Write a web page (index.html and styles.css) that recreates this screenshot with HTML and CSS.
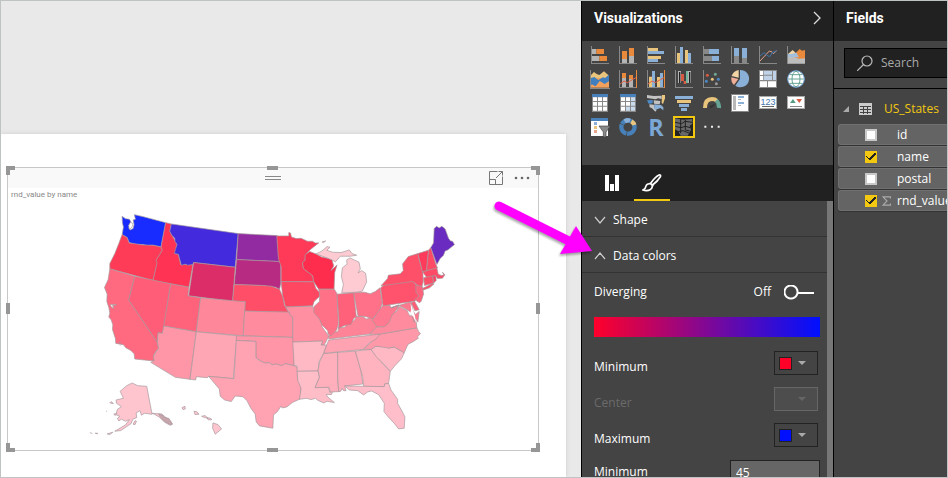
FILE: index.html
```html
<!DOCTYPE html>
<html lang="en">
<head>
<meta charset="utf-8">
<title>Report</title>
<link rel="stylesheet" href="styles.css">
</head>
<body>
<div class="app">
<main class="canvas">
  <section class="page">
    <article class="visual">
      <header class="visual-bar">
        <span class="grip"></span>
        <button class="plain" aria-label="Focus mode"><svg width="14" height="14" viewBox="0 0 14 14" fill="none" stroke="#777"><path d="M8.500.5h-8v13h13v-8M9.500.5h4v4M13.500.5L7 7M.5 8.500h6v5"/></svg></button>
        <button class="plain" aria-label="More options"><svg width="16" height="14" viewBox="0 0 16 14" fill="#666"><circle cx="2" cy="7" r="1.300"/><circle cx="8" cy="7" r="1.300"/><circle cx="14" cy="7" r="1.300"/></svg></button>
      </header>
      <h1 class="visual-title">rnd_value by name</h1>
      <svg class="map" viewBox="-246 2 1593 735" role="img" aria-label="Map of US states">
        <g>
          <path fill="#182cff" d="M97 48l10 7 12 2 5 9-6 14 3 9 9-4 3-12-3-14 7-2-3-14 26 6 68 18-14 73-24-5-18 1-12-3-20 0-22-6-6-15-15-9 4-23-3-12z"/>
          <path fill="#ff3c58" d="M97 103l15 9 6 16 22 3 20 3 30 1 24 5 4 10-18 30 3 8-13 53-130-35 0-16 15-30 12-30z"/>
          <path fill="#ff3354" d="M228 67l17 4-4 22 9 17 12 22-5 28 9 2 7 31 37-1-12 69-108-20 12-53-3-8 19-30-4-10z"/>
          <path fill="#432bdd" d="M245 71l201 29-9 101-125-14-3 6-15 2-6-3-13 3-9-33-12-2 3-12 5-16-6-8-1-10-8-8-7-13z"/>
          <path fill="#922ba2" d="M446 100l117 6 2 25 4 20 2 33-130-6z"/>
          <path fill="#b82b83" d="M441 178l130 6 3 8 0 58-4 18-12-7-13-1-25-4-86-3z"/>
          <path fill="#dc2d68" d="M312 187l125 14-8 102-132-16z"/>
          <path fill="#ff4e68" d="M434 253l86 3 25 2 25 9 10 23 5 25 13 22-133-4 2-28-38-2z"/>
          <path fill="#fff" d="M122 66l8 4-4 12-8 5-1-12z"/>
        </g>
        <g transform="translate(0 330)">
          <path fill="#ff6a80" d="M60-124l75 22-18 72L203 97l3 18-8 10-6 10 1 18-58-6-2-16-10-10-15-8-7-9-23-4-1-14-9-28 1-14-5-15-7-8 3-12-3-17-6-18 1-22-8-20 11-24z"/>
          <path fill="#fff" d="M62-17l18 1-12 2 4 9-8-5z"/>
          <path fill="#ff5d78" d="M135-102l108 23-20 127-5 22-13-2-2 29L117-30z"/>
          <path fill="#ff627b" d="M243-79l55 10-3 26 38 6-13 102-98-17z"/>
          <path fill="#ff879a" d="M333-37l134 12-6 102-141-12z"/>
          <path fill="#ff96a7" d="M222 48l98 17-19 143-44-6-74-45 10-4-2-13 8-15 8-10-4-18 2-29 13 2z"/>
          <path fill="#ffa6b4" d="M320 65l122 12-11 129-75-7-2 4-34-3-2 10-17-2z"/>
          <path fill="#ff8c9e" d="M465 3l135 3 5 8 5 6v62l-149-5z"/>
          <path fill="#ff95a7" d="M440 77l170 5 3 18 1 67-16-4-10-2-12 6-16-5-12 2-9-6-12 1-14-6-14-10V94l-59-3z"/>
          <path fill="#ffa2b1" d="M440 91l59 3v49l14 10 14 6 12-1 9 6 12-2 16 5 12-6 26 6 10 5v33l11 27-3 35-22 10-18 14-14 3-3-6-11 17-12 10-2 40-40-7-10-12-3-24-13-17-12-23-12-12-23-2-12 17-20-5-13-11-3-22-32-38 76 7z"/>
          <path fill="#ffc5ce" d="M83 298l12-8-15-10-1-10 22-5-10-21 20-17 16-8 17 8 27 2 16 84-23-3-9 6-4-14-12 7 2 14-12 5-5 13-31 21-18 2 32-19 12-16-12 5-12-6-8 5-4-8 7-6-12-5z"/>
          <path fill="#ffc5ce" d="M130 343l6-11 4 2-4 10zM187 310l9 1 20 1 14 12 8 5 10 15-7 2-16-9-17-16-14-8zM60 279l11 2-7-6zM72 312l9-1-5 6zM52 372l17-5-9 7zM0 368l8 3M16 370h7v2zM49 304h3M277 293l9-4 1 8-7 2zM313 304l8 1 7 8-12 1zM336 319l11-2 8 8-10-2zM352 324l8 0 7 5-11 1zM370 339l15 5 11 13-19 16-8-18z"/>
          <path fill="#c8a5ad" d="M207 312l12 4 6 7 12 2 11 16-6 3-17-9-14-15z"/>
          <path fill="#ff6a80" d="M87 96l6 1-3 2zM90 106h2"/>
        </g>
        <g transform="translate(540 330)">
          <path fill="#ff8fa1" d="M48-10l82-2 5 12 15 22 8 17 0 11 20 28-7 15-7 12-9 0 5-12-90 3V20l-8-5-3-10z"/>
          <path fill="#ffb9c4" d="M70 96l90-3-5 12 17 0-10 26-13 24-3 28-63 1v-16l-9-2z"/>
          <path fill="#ffbdc8" d="M83 184l63-1 4 19-13 31 41-1 3 15 9-3-4 10-15-1 3 7 21 18-22-4-10 5-18-8-7-6-13 4-13-4-22 3 5-33-10-23z"/>
          <path fill="#ffafbb" d="M163 130l42-3v80l3 38-25 1-5-14-41 1 13-31-4-22 5-25z"/>
          <path fill="#ffabba" d="M205 127l53-4 16 56 7 43-55 6 4 14-8 0-4-7-4 9-6 1-3-38z"/>
          <path fill="#ffb3bf" d="M258 123l47-5 16 20 24 27 18 20-5 35-12 2-1 8-62-1-3-29z"/>
          <path fill="#ffbec9" d="M226 228l57 1 62 1 1-8 12-2 7 20 20 28v12l15 27 7 14-2 34-17 2-14-18-17-18-13-16 1-25-17-26-21-11-12 3-12 9-18-13-25-2z"/>
          <path fill="#ffb9c5" d="M305 118l15-10 35 2 4 4 16-3 30 17-8 18-20 21-14 17-18-20-24-24z"/>
          <path fill="#ff98a9" d="M332 72l111-19 6 13 5 4-10 11 4 3-15 10-17 9-11 25-30-17-17 3-38-6-15 10-23 0z"/>
          <path fill="#ffa2b2" d="M178 90l154-18-12 15-18 10-20 21-119 12 9-26z"/>
          <path fill="#ff8396" d="M178 78l10-13 17 0 4-12 15-1 12-10 20-12 5-11 20 1 11 7 19-8 10 16 2 19-23 18-122 15z"/>
          <path fill="#ff8c9e" d="M300 73l22-23 20 0 15-12 8-23 19-13 4-13 12 5 14 8 5 12 15 10 7 12 2 17-111 19z"/>
        </g>
        <g transform="translate(540 45)">
          <path fill="#ff3958" d="M22 62l36 0V52l5 1 3 12 14 5 15-1 19 9 15 0 8 5h11l-25 20-15 15-1 17-8 7 3 18 28 22 3 18-98-1v-45l-8-22-2-23z"/>
          <path fill="#ff2d4d" d="M107 118l14-9 19 7 16 9 23 5 9 4 5 18-8 14 9-8 9-9-7 23-2 50-46 0-15-22-3-18-28-22-3-18 8-7z"/>
          <path fill="#ffcbd2" d="M140 116l18-9 15-13 9 2-10 9 18 6 25 1 25-8 8 11 14 5-19 3-30 0-15 17-10-6-23-9zM217 233l5-25-6-24 3-26 14-11-1-13 10-6 27 13 4 20-7 12 11-7 12 8 3 26-13 28-17 3zM158 80l11-3-7 5z"/>
          <path fill="#ff4762" d="M35 199l98 1 6 19 12 14-1 11-16 15-4 13-82 3-9-36z"/>
          <path fill="#ff7187" d="M148 222h47l8 14 4 89-5 20-8 7-8 10-10-5-1-10-17-17-8-18-17-20 1-18 16-15 1-18z"/>
          <path fill="#ff607a" d="M203 237l50-4 8 72-8 5-8 18-19 3-19 9 2-17z"/>
          <path fill="#ff7188" d="M253 233l32-2 18 5 15-7 14-11 7 46-8 23-21 24-22-7-22-1z"/>
          <path fill="#ff7a90" d="M340 272l22-2 3 8 24-9-6 14-15 18-9 22-14 12-22 0-14-19 15-23z"/>
          <path fill="#ff526c" d="M334 218l16-13 80-7 11 11 1 22 10 15-17 12-94 14z"/>
          <path fill="#ff506a" d="M335 212l20-22 2-10 36-4 9-10-2-20 17-22 29-9 7 30 8 27 1 28-4 15-12-4-16-12zM460 220l28-14 7 0-14 12-20 7z"/>
          <path fill="#ff627b" d="M440 209l20 6 3 22-7 21-5 5-15-10 13-10-9-12z"/>
          <path fill="#ff798e" d="M365 278l60-18 7 29 7 9 11-9-4 32-8-12-3 13-12-32-20-12-15-7z"/>
          <path fill="#ff5d76" d="M426 263l10-5 14 26-13 3z"/>
          <path fill="#fff" stroke="none" d="M424 264l7 20 6 18 3 21-8-19-10-9 4-10z"/>
          <path fill="#ff3b5b" d="M446 115l32-10-6 62-12 3z"/>
          <path fill="#ff4965" d="M478 105l7-8 15 51 5 10-33 9z"/>
          <path fill="#ff4b65" d="M460 170l43-12 4 19 10 4 7-2-4-8 7 8-7 10-15 1-6-9-26 7z"/>
          <path fill="#ff506a" d="M463 188l28-6 2 22-27 7z"/>
          <path fill="#ff405e" d="M491 182l9 0 1 14-8 8z"/>
          <path fill="#692bc0" d="M485 97l8-14 2-43 7-7 8 5 8-5 10 8 10 28 6 8 6 1 6 10-20 16-8 3-5 13-10 10-10 18z"/>
        </g>
      </svg>
      <i class="handle tl"></i><i class="handle tr"></i><i class="handle bl"></i><i class="handle br"></i>
      <i class="handle t"></i><i class="handle b"></i><i class="handle l"></i><i class="handle r"></i>
    </article>
  </section>
</main>

<aside class="panel viz">
  <header class="panel-head"><h2>Visualizations</h2>
    <button class="plain" aria-label="Collapse"><svg width="8" height="14" viewBox="0 0 8 14" fill="none" stroke="#ddd" stroke-width="1.300"><path d="M1 1l6 6-6 6"/></svg></button>
  </header>
  <div class="gallery">
    <button class="plain" aria-label="Stacked bar"><svg viewBox="0 0 54 54"><path fill="#888" d="M0 0h3v51h51v3H0z"/><path fill="#b4b4b4" d="M3 9h13v15H3zM3 30h22v15H3z"/><path fill="#e8893b" d="M16 9h23v15H16zM25 30h23v15H25z"/></svg></button>
    <button class="plain" aria-label="Stacked column"><svg viewBox="0 0 54 54"><path fill="#888" d="M0 0h3v51h51v3H0z"/><path fill="#b4b4b4" d="M9 39h15v12H9zM30 30h15v21H30z"/><path fill="#e8893b" d="M9 15h15v24H9zM30 6h15v24H30z"/></svg></button>
    <button class="plain" aria-label="Clustered bar"><svg viewBox="0 0 54 54"><path fill="#888" d="M0 0h3v51h51v3H0z"/><path fill="#e9c47c" d="M3 6h30v9H3zM3 30h39v9H3z"/><path fill="#8bb0d8" d="M3 15h48v9H3zM3 39h30v9H3z"/></svg></button>
    <button class="plain" aria-label="Clustered column"><svg viewBox="0 0 54 54"><path fill="#888" d="M0 0h3v51h51v3H0z"/><path fill="#e9c47c" d="M6 21h9v30H6zM30 12h9v39h-9z"/><path fill="#8bb0d8" d="M15 3h9v48h-9zM39 21h9v30h-9z"/></svg></button>
    <button class="plain" aria-label="100% stacked bar"><svg viewBox="0 0 54 54"><path fill="#888" d="M0 0h3v51h51v3H0zM3 9h15v15H3zM3 30h24v15H3z"/><path fill="#8bb0d8" d="M18 9h30v15H18zM27 30h21v15H27z"/></svg></button>
    <button class="plain" aria-label="100% stacked column"><svg viewBox="0 0 54 54"><path fill="#888" d="M0 0h3v51h51v3H0zM9 30h15v21H9zM33 36h15v15H33z"/><path fill="#8bb0d8" d="M9 6h15v24H9zM33 6h15v30H33z"/></svg></button>
    <button class="plain" aria-label="Line"><svg viewBox="0 0 54 54"><path fill="#888" d="M0 0h3v51h51v3H0z"/><g fill="none" stroke-width="3"><path stroke="#e8a58d" d="M3 45l28-30 8 3 4 5 10-9"/><path stroke="#3f75ae" d="M3 30l12-10 9 8 8 4 10-15 5 1 6-6"/></g></svg></button>
    <button class="plain" aria-label="Area"><svg viewBox="0 0 54 54"><path fill="#888" d="M0 0h3v54H0z"/><path fill="#f1d5a5" d="M3 24l14-12 15 14v14H3z"/><path fill="#e8893b" d="M22 25L38 9l7 5 9-2v28H22z"/><path fill="#a3bfe0" d="M3 24l10 0 15-4 8 14H3z"/><path fill="#bdbdbd" d="M3 33l17-1 15 6 19-1v16H3z"/></svg></button>

    <button class="plain" aria-label="Ribbon"><svg viewBox="0 0 54 54"><path fill="#888" d="M-3 0H0v54h57v3H-3z"/><path fill="#e9c47c" d="M0 15L9 6l8 6 8 3L39 4l15 13v20H0z"/><path fill="#f2a15c" d="M0 24l54 0v29H0z"/><path fill="#3f7fc0" d="M0 24l10-3 12 9 14-8 6 2 12-10v20l-13 8-15-9-12 16-12-6-2 4z"/></svg></button>
    <button class="plain" aria-label="Line and stacked column"><svg viewBox="0 0 54 54"><path fill="#888" d="M0 0h3v51h51v3H0z"/><path fill="#b4b4b4" d="M9 24h12v27H9zM30 27h12v24H30z"/><path fill="#e8893b" d="M9 9h12v15H9zM30 15h12v12H30zM51 0h3v54h-3z"/><path fill="none" stroke="#e36144" stroke-width="3" d="M3 42l12-9 10 5 15-9 11-6"/></svg></button>
    <button class="plain" aria-label="Line and clustered column"><svg viewBox="0 0 54 54"><path fill="#888" d="M0 0h3v51h51v3H0z"/><path fill="#e9c47c" d="M6 20h9v31H6zM30 21h9v30h-9z"/><path fill="#8bb0d8" d="M15 3h9v48h-9zM39 9h9v42h-9z"/><path fill="#e8893b" d="M51 0h3v54h-3z"/><path fill="none" stroke="#e36144" stroke-width="3" d="M3 42l12-9 10 5 15-9 11-6"/></svg></button>
    <button class="plain" aria-label="Waterfall"><svg viewBox="0 0 54 54"><path fill="#888" d="M0 0h3v51h51v3H0z"/><path fill="#b4b4b4" d="M9 3h9v36H9zM39 3h9v36h-9z"/><path fill="#222" d="M12 6h4v33h-4zM42 6h4v33h-4z"/><path fill="#d65b42" d="M18 12h9v21h-9zM26 33h8v9h-8z"/><path fill="#72b59d" d="M33 3h6v36h-6z"/></svg></button>
    <button class="plain" aria-label="Scatter"><svg viewBox="0 0 54 54"><path fill="#888" d="M0 0h3v51h51v3H0z"/><circle cx="13" cy="16" r="4.500" fill="#d65b42"/><circle cx="37" cy="13" r="4.500" fill="#72a793"/><circle cx="10" cy="34" r="4.500" fill="#4b87c4"/><circle cx="28" cy="28" r="4.500" fill="#e9c47c"/><circle cx="46" cy="28" r="4.500" fill="#4b87c4"/><circle cx="40" cy="41" r="4.500" fill="#999"/></svg></button>
    <button class="plain" aria-label="Pie"><svg viewBox="0 0 54 54"><path fill="#8bb0d8" d="M27 0a26 26 0 1 1-14 47l14-20z"/><path fill="#f1d5a5" d="M23 0v23L2 18Q7 3 23 0z"/><path fill="#eeae98" d="M1 22l21 5L9 45Q-1 36 1 22z"/></svg></button>
    <button class="plain" aria-label="Treemap"><svg viewBox="0 0 54 54"><path fill="#888" d="M0 0h54v54H0z"/><path fill="#fff" d="M3 3h9v12H3zM3 18h9v12H3zM3 34h21v17H3zM27 34h24v17H27z"/><path fill="#bfd2e8" d="M14 3h25v11H14zM14 17h25v13H14zM42 3h9v27h-9z"/></svg></button>
    <button class="plain" aria-label="Map"><svg viewBox="0 0 54 54"><circle cx="27" cy="27" r="25" fill="#fff" stroke="#6c9fd0" stroke-width="3"/><g fill="none" stroke="#67a394" stroke-width="3"><ellipse cx="27" cy="27" rx="12" ry="23"/><path d="M4 27h46M8 14h38M8 40h38"/></g></svg></button>

    <button class="plain" aria-label="Table"><svg viewBox="0 0 54 54"><path fill="#888" d="M3 0h48v54H3z"/><path fill="#4881ba" d="M3 0h48v9H3z"/><path fill="#fff" d="M6 10h12v11H6zM21 10h12v11H21zM36 10h12v11H36zM6 24h12v11H6zM21 24h12v11H21zM36 24h12v11H36zM6 38h12v12H6zM21 38h12v12H21zM36 38h12v12H36z"/></svg></button>
    <button class="plain" aria-label="Matrix"><svg viewBox="0 0 54 54"><path fill="#888" d="M3 0h48v54H3z"/><path fill="#4881ba" d="M3 0h48v9H3z"/><path fill="#fff" d="M6 10h12v11H6zM21 10h12v11H21zM6 24h12v11H6zM21 24h12v11H21zM6 38h12v12H6z"/><path fill="#cadbed" d="M36 10h12v11H36zM36 24h12v11H36zM21 38h12v12H21zM36 38h12v12H36z"/></svg></button>
    <button class="plain" aria-label="Filled map"><svg viewBox="0 0 54 54"><path fill="#c3c3c3" d="M0 3l20 3 24-1v10L33 13l-7 3L0 12zM20 19l20 2-2 10-17-2z"/><path fill="#4e8cc9" d="M0 19l17-1v10l-12 1z"/><path fill="#e9c47c" d="M45 3h9v10l-6 17-4-3z"/><path fill="#8bb0d8" d="M22 31l20 2 7 7v9l-9-7-15 6-4-4z"/><path fill="#c3c3c3" d="M7 31l14 1v12l8 4-4 5-10-10-7-3z"/></svg></button>
    <button class="plain" aria-label="Funnel"><svg viewBox="0 0 54 54"><path fill="#8bb0d8" d="M0 6h54v9H0zM12 30h30v9H12zM18 42h18v9H18z"/><path fill="#e9c47c" d="M6 18h42v9H6z"/></svg></button>
    <button class="plain" aria-label="Gauge"><svg viewBox="0 0 54 54"><g fill="none" stroke-width="12"><path stroke="#e9c47c" d="M6 42Q6 15 27 15q9 0 14 5"/><path stroke="#67a394" d="M40 19q9 9 8 23"/></g><path fill="#333" d="M20 36l21-8-14 13q-8 3-7-5z"/></svg></button>
    <button class="plain" aria-label="Multi-row card"><svg viewBox="0 0 54 54"><path fill="#888" d="M0 0h54v54H0z"/><path fill="#fff" d="M3 3h48v48H3z"/><path fill="#b8b8b8" d="M6 6h9v42H6zM21 15h9v3h-9zM21 33h9v3h-9z"/><path fill="#8bb0d8" d="M21 6h18v6H21zM21 24h18v6H21z"/></svg></button>
    <button class="plain" aria-label="Card"><svg viewBox="0 0 54 54"><path fill="#aaa" d="M0 6h54v39H0z"/><path fill="#fff" d="M3 9h48v33H3z"/><text x="27" y="32" text-anchor="middle" class="digits">123</text><path fill="#666" d="M9 36h36v3H9z"/></svg></button>
    <button class="plain" aria-label="KPI"><svg viewBox="0 0 54 54"><path fill="#aaa" d="M0 6h54v39H0z"/><path fill="#fff" d="M3 9h48v33H3z"/><path fill="#539b83" d="M9 27l9-12 8 12z"/><path fill="#d65b42" d="M28 15h17l-8 12z"/><path fill="#888" d="M9 36h36v3H9z"/></svg></button>

    <button class="plain" aria-label="Slicer"><svg viewBox="0 0 54 54"><path fill="#fff" d="M0 0h51v54H0z"/><path fill="#4881ba" d="M0 0h51v9H0z"/><path fill="#8bb0d8" d="M9 12h9v9H9z"/><path fill="#e9c47c" d="M9 24h9v9H9z"/><path fill="#e8a58d" d="M9 36h9v9H9z"/><path fill="#888" stroke="#444" stroke-width="2" d="M24 24h34L45 42v15h-8V42z"/></svg></button>
    <button class="plain" aria-label="Donut"><svg viewBox="0 0 54 54"><g fill="none" stroke-width="13"><circle cx="27" cy="27" r="20" stroke="#4881ba" stroke-dasharray="34 2"/><path stroke="#e9c47c" d="M37 10q7 4 9 11"/><path stroke="#8bb0d8" d="M17 10q8-5 16-2"/></g></svg></button>
    <button class="plain" aria-label="R script"><svg viewBox="0 0 54 54"><text x="27" y="53" text-anchor="middle" class="rmark">R</text></svg></button>
    <button class="plain selected" aria-label="Shape map"><svg viewBox="0 0 54 54"><path fill="#6a6a6a" d="M0 1l25 4 27-2v14l-8 6 4 12-10 18-21 0-7-13L0 34z"/><path fill="none" stroke="#222" stroke-width="3" d="M0 13l20 4 10-7 22 3M17 3v43M1 25l17 4 13-4 15 4M31 6v30l13 3M9 41l15-3 20 8"/></svg></button>
    <button class="plain" aria-label="Import visual"><svg viewBox="0 0 54 54" fill="#eee"><path d="M4 23h6v6H4zM24 23h6v6h-6zM44 23h6v6h-6z"/></svg></button>
  </div>
  <nav class="tabs">
    <button class="tab" aria-label="Fields"><svg width="16" height="18" viewBox="0 0 16 18" fill="#fff"><path d="M1 1h4v16H1zM6 10h4v7H6zM11 1h4v16h-4z"/></svg></button>
    <button class="tab active" aria-label="Format"><svg width="20" height="18" viewBox="0 0 20 18" fill="none" stroke="#fff" stroke-width="1.600"><path d="M8.500 9.500Q13 3 17 1q2-.5 1.500 1.500Q16 7 10.500 11zM9 10Q5 9 4 12q-.5 3-3 4 4 1.500 7.500-.5Q11 13.500 10 11zM7.500 9l4 3"/></svg></button>
  </nav>
  <div class="settings">
    <button class="section"><svg width="12" height="8" viewBox="0 0 12 8"><path d="M1 1l5 6 5-6"/></svg>Shape</button>
    <button class="section"><svg width="12" height="8" viewBox="0 0 12 8"><path d="M1 7l5-6 5 6"/></svg>Data colors</button>
    <div class="form">
      <div class="row"><label for="div">Diverging</label><span class="state">Off</span><input type="checkbox" class="switch" id="div"></div>
      <div class="ramp"></div>
      <div class="row"><label for="cmin">Minimum</label><button class="picker" id="cmin"><i class="swatch red"></i><i class="caret"></i></button></div>
      <div class="row off"><label for="ccen">Center</label><button class="picker" id="ccen" disabled><i class="swatch"></i><i class="caret"></i></button></div>
      <div class="row"><label for="cmax">Maximum</label><button class="picker" id="cmax"><i class="swatch blue"></i><i class="caret"></i></button></div>
      <div class="row last"><label for="vmin">Minimum</label><input type="text" class="num" id="vmin" value="45"></div>
    </div>
  </div>
</aside>

<aside class="panel fields">
  <header class="panel-head"><h2>Fields</h2></header>
  <div class="search-wrap"><div class="search"><svg width="16" height="16" viewBox="0 0 16 16" fill="none" stroke="#bbb" stroke-width="1.200"><circle cx="10" cy="6" r="5"/><path d="M6.500 9.500L0 16"/></svg><input type="search" placeholder="Search" aria-label="Search"></div></div>
  <div class="tree">
    <div class="table-name"><svg width="6" height="6" viewBox="0 0 6 6"><path d="M6 0v6H0z" fill="#aaa"/></svg><svg width="13" height="12" viewBox="0 0 13 12"><path fill="#ccc" d="M0 0h13v12H0z"/><path stroke="#444" d="M1 3.500h11M1 6.500h11M1 9.500h11M4.500 3v8M8.500 3v8"/></svg><span>US_States</span></div>
    <label class="field"><input type="checkbox"><span class="sum"></span>id</label>
    <label class="field"><input type="checkbox" checked><span class="sum"></span>name</label>
    <label class="field"><input type="checkbox"><span class="sum"></span>postal</label>
    <label class="field"><input type="checkbox" checked><span class="sum"><svg width="9" height="10" viewBox="0 0 9 10" fill="none" stroke="#aaa" stroke-width="1.200"><path d="M8.500 2.500V.8H1L5 5 1 9.200h7.500V7.500"/></svg></span>rnd_value</label>
  </div>
</aside>

<svg class="pointer" width="110" height="70" viewBox="0 0 110 70" aria-hidden="true"><path d="M13 14l76 38" stroke="#f0f" stroke-width="9" stroke-linecap="round"/><path d="M90 34l16 25-32 3z" fill="#f0f"/></svg>
</div>
</body>
</html>
```
FILE: styles.css
```css
* { box-sizing: border-box; }
body {
  margin: 0;
  font: 12px/16px "Open Sans", "Noto Sans", sans-serif;
  color: #fff;
}
.app {
  position: relative;
  display: grid;
  grid-template-columns: minmax(0, 1fr) 252px 114px;
  height: 100vh;
  border: 1px solid #bfc3c3;
  overflow: hidden;
}
button, input { font: inherit; color: inherit; }
.plain { display: block; padding: 0; border: 0; background: none; line-height: 0; }
h1, h2 { margin: 0; }

.canvas { display: flex; padding: 133px 15px 0 0; background: #e9e9e9; }
.page { flex: 1; min-width: 0; padding: 33px 27px 0 6px; background: #fff; box-shadow: 0 0 4px #ccc; }
.visual { position: relative; border: 1px solid #c8c8c8; padding-bottom: 4px; }
.visual-bar {
  display: grid;
  grid-template-columns: 1fr auto 14px 24px;
  align-items: center;
  gap: 11px;
  height: 20px;
  background: #f9f9f9;
}
.grip {
  grid-column: 1 / -1;
  grid-row: 1;
  justify-self: center;
  width: 16px;
  height: 4px;
  border: solid #888;
  border-width: 1px 0;
}
.visual-bar button { grid-row: 1; }
.visual-bar button:nth-of-type(1) { grid-column: 3; }
.visual-bar button:nth-of-type(2) { grid-column: 4; text-align: left; }
.visual-title { padding-left: 3px; font: 8px/13px Roboto, sans-serif; color: #888; }
.map { display: block; width: 100%; stroke: #a3979c; stroke-width: 2; stroke-linejoin: round; }
.handle { position: absolute; border: 0 solid #969696; }
.tl, .tr, .bl, .br { width: 9px; height: 9px; }
.tl { left: -2px; top: -2px; border-width: 4px 0 0 4px; }
.tr { right: -2px; top: -2px; border-width: 4px 4px 0 0; }
.bl { left: -2px; bottom: -2px; border-width: 0 0 4px 4px; }
.br { right: -2px; bottom: -2px; border-width: 0 4px 4px 0; }
.t, .b { left: calc(50% - 6px); width: 11px; border-width: 4px 0 0; }
.t { top: -2px; }
.b { bottom: -2px; }
.l, .r { top: calc(50% - 6px); height: 11px; border-width: 0 0 0 4px; }
.l { left: -2px; }
.r { right: -2px; }

.panel { display: flex; flex-direction: column; min-width: 0; min-height: 0; background: #444; border-left: 1px solid #000; overflow: hidden; }
.panel-head {
  display: flex;
  flex: none;
  align-items: center;
  justify-content: space-between;
  height: 40px;
  padding: 0 12px 6px;
  background: #212121;
}
h2 { font: 700 14px/18px Roboto, sans-serif; }
.gallery {
  display: grid;
  grid-template-columns: repeat(8, 18px);
  grid-auto-rows: 18px;
  gap: 6px 10px;
  padding: 5px 9px 29px;
}
.gallery svg { display: block; width: 18px; height: 18px; overflow: visible; }
.selected { outline: 1px solid #f2c811; outline-offset: 1px; box-shadow: 0 0 0 2px #f2c811; background: #222; }
.digits { font: 27px "Liberation Sans", sans-serif; fill: #3f75ae; }
.rmark { font: 700 70px "Open Sans", sans-serif; fill: #7ba7d6; }
.tabs { display: flex; flex: none; height: 36px; padding-left: 12px; background: #212121; }
.tab { display: flex; align-items: center; justify-content: center; width: 36px; padding: 2px 0 0; border: 0; border-bottom: 2px solid transparent; background: none; }
.tab + .tab { margin-left: 4px; }
.tab.active { border-color: #f2c811; }
.settings { flex: 1; min-height: 0; overflow: hidden; border-right: 6px solid #777; }
.section {
  display: flex;
  align-items: center;
  gap: 7px;
  width: 100%;
  height: 36px;
  padding: 2px 12px 0;
  border: 0;
  border-bottom: 1px solid #333;
  background: none;
}
.section svg { fill: none; stroke: #ccc; stroke-width: 1.200; }
.form { padding: 1px 7px 0 12px; }
.row { display: flex; align-items: center; height: 36px; padding-right: 2px; }
.row label { flex: 1; }
.row.off { color: #6b6b6b; }
.state { margin-right: 13px; }
.switch {
  appearance: none;
  width: 30px;
  height: 15px;
  margin: 0 4px 0 0;
  background:
    radial-gradient(circle at 7px 7px, #444 5px, #fff 6px, #fff 7px, transparent 8px) no-repeat,
    linear-gradient(#fff, #fff) 14px 7px / 16px 2px no-repeat;
}
.ramp { height: 20px; margin: 7px 0 12px; background: linear-gradient(90deg, #ff002b, #0010ff); }
.picker { display: flex; align-items: center; gap: 6px; width: 44px; height: 24px; margin-bottom: 8px; padding: 0 4px; border: 1px solid #222; background: none; }
.swatch { width: 13px; height: 13px; border: 1px solid transparent; }
.red { background: #ff0029; border-color: #222; }
.blue { background: #0010ff; border-color: #222; }
.caret { border: 4px solid transparent; border-top-color: #aaa; border-bottom: 0; }
.off .picker { border-color: #666; background: #4d4d4d; }
.off .caret { border-top-color: #666; }
.last { height: 30px; padding: 0; }
.num { width: 90px; height: 24px; padding: 0 5px; border: 1px solid #222; background: #666; }

.search-wrap { padding: 7px 0 10px 10px; border-bottom: 1px solid #000; }
.search { display: flex; align-items: center; gap: 8px; height: 30px; padding-left: 12px; border: 1px solid #000; border-right: 0; background: #212121; }
.search input { width: 70px; min-width: 0; padding: 0; border: 0; outline: 0; background: none; }
.search input::placeholder { color: #aaa; opacity: 1; }
.search svg { flex: none; }
.tree { padding: 9px 0 0 4px; }
.table-name { display: flex; align-items: center; height: 22px; margin-bottom: 4px; color: #f2c811; }
.table-name svg { margin-left: 5px; }
.table-name svg + svg { margin: 0 12px 0 10px; }
.field {
  display: flex;
  align-items: center;
  height: 21px;
  margin-bottom: 1px;
  padding-left: 26px;
  border: 1px solid #707070;
  border-right: 0;
  border-radius: 3px 0 0 3px;
  background: #646464;
  box-shadow: 0 1px #333;
  white-space: nowrap;
}
.field input { appearance: none; flex: none; width: 12px; height: 12px; margin: 0; border: 2px solid #c8c8c8; background: #fff; }
.field input:checked {
  border: 0;
  background:
    linear-gradient(45deg, transparent 45%, #222 45% 60%, transparent 60%) 1px 5px / 4px 4px no-repeat,
    linear-gradient(-45deg, transparent 42%, #222 42% 62%, transparent 62%) 4px 2px / 7px 7px no-repeat,
    #f2c811;
}
.sum { width: 20px; padding-left: 5px; line-height: 0; flex: none; }
.pointer { position: absolute; left: 485px; top: 191px; filter: drop-shadow(-1px 2px 1px #0005); fill: none; }
```
